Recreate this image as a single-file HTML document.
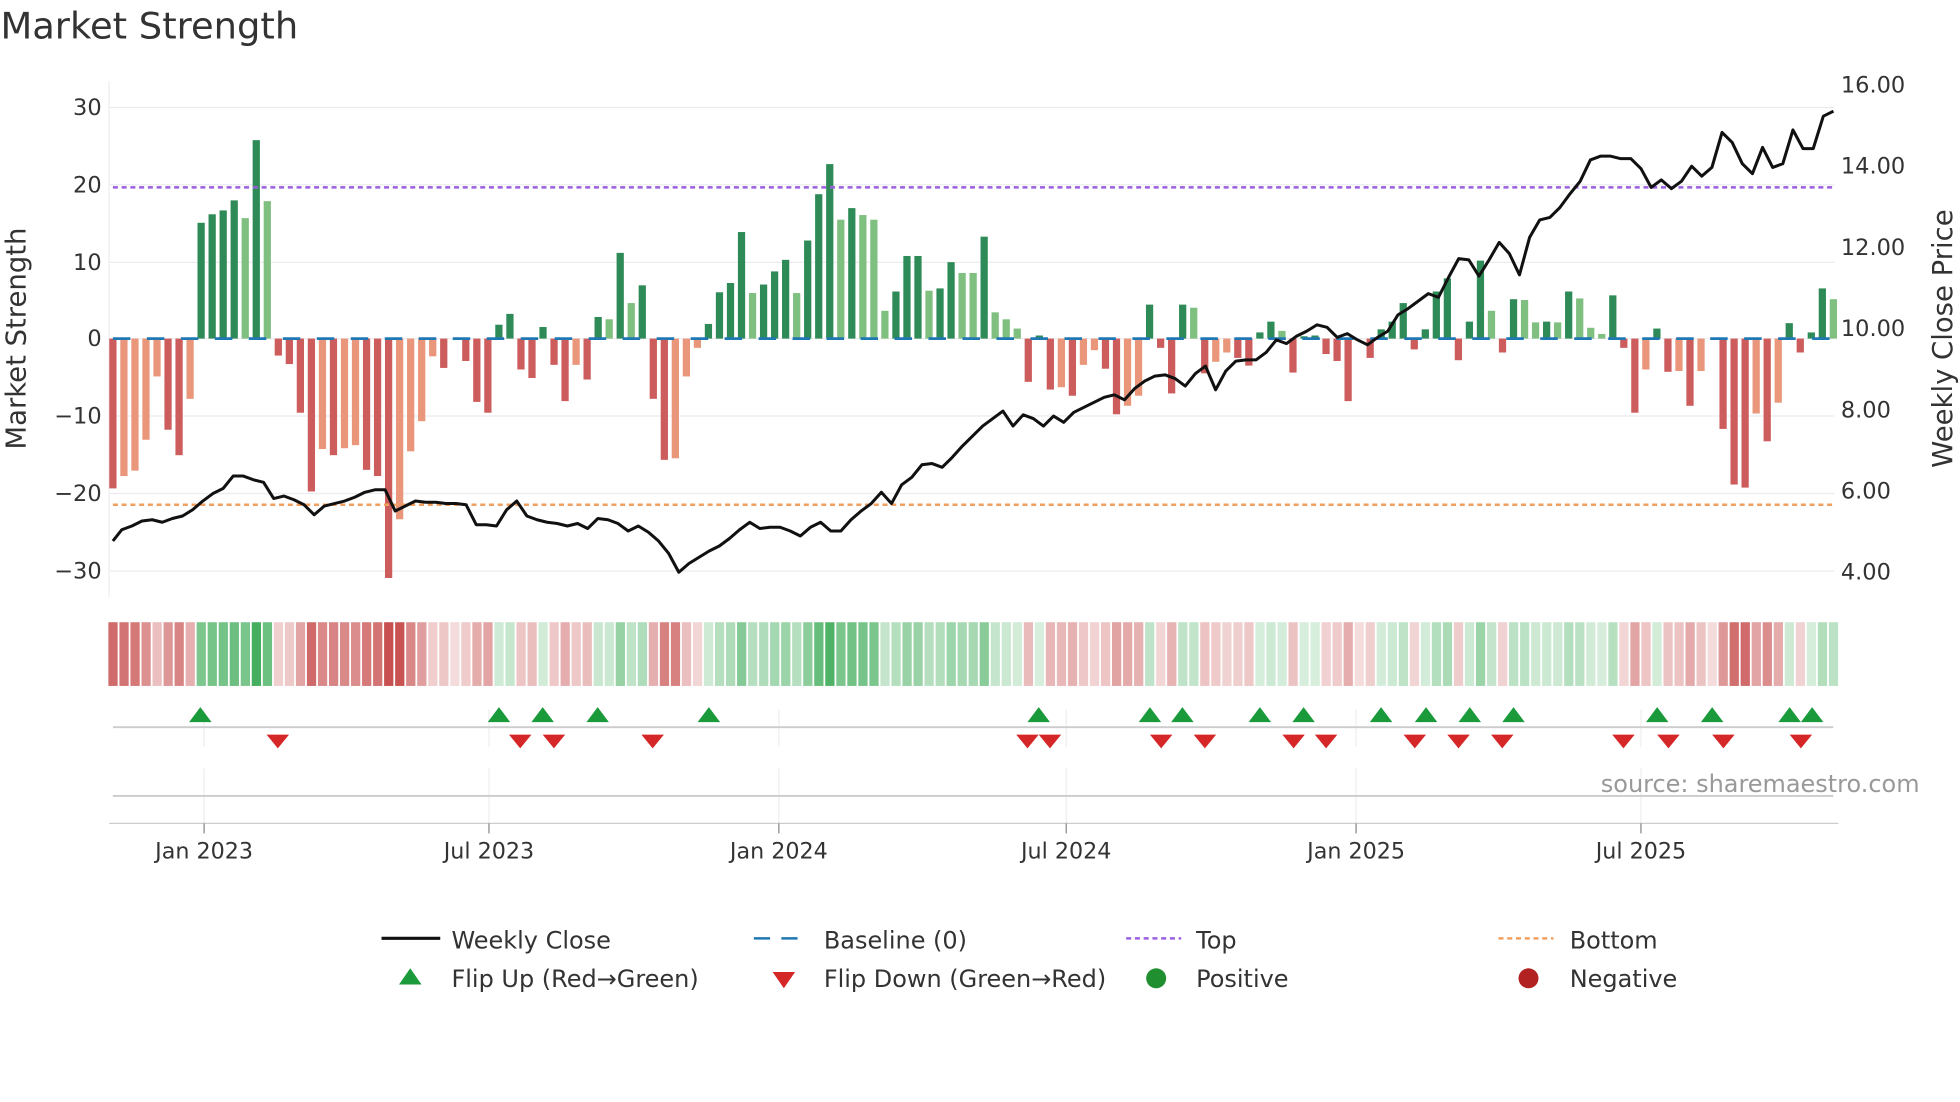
<!DOCTYPE html>
<html><head><meta charset="utf-8"><style>
html,body{margin:0;padding:0;background:#fff;}
svg{display:block;font-family:"DejaVu Sans","Liberation Sans",sans-serif;}
</style></head><body>
<svg id="s" width="1960" height="1102" viewBox="0 0 1568 882" xmlns="http://www.w3.org/2000/svg">
<rect width="1568" height="882" fill="#fff"/>
<text x="0" y="31" font-size="29.5" fill="#333">Market Strength</text>
<g id="grid" stroke="#ececf0" stroke-width="1"></g>
<line x1="87" y1="65" x2="87" y2="478" stroke="#eee"/>
<g id="bars"></g>
<g id="base"></g>
<line x1="90" y1="150" x2="1468" y2="150" stroke="#9b5fe0" stroke-width="2" stroke-dasharray="4,3"/>
<line x1="90" y1="404" x2="1468" y2="404" stroke="#f0a060" stroke-width="2" stroke-dasharray="4,3"/>
<polyline id="price" fill="none" stroke="#111" stroke-width="2.4" stroke-linejoin="round" transform="translate(90,0) scale(1.0133,1) translate(-90,0)"/>
<g font-size="18" fill="#333" text-anchor="end">
<text x="81" y="92">30</text><text x="81" y="154">20</text><text x="81" y="216">10</text><text x="81" y="277">0</text>
<text x="81" y="339">−10</text><text x="81" y="401">−20</text><text x="81" y="463">−30</text>
</g>
<g font-size="18" fill="#333">
<text x="1473" y="74">16.00</text><text x="1473" y="139">14.00</text><text x="1473" y="204">12.00</text><text x="1473" y="269">10.00</text>
<text x="1473" y="334">8.00</text><text x="1473" y="399">6.00</text><text x="1473" y="464">4.00</text>
</g>
<text transform="translate(20,271) rotate(-90)" font-size="22" fill="#333" text-anchor="middle">Market Strength</text>
<text transform="translate(1562,271) rotate(-90)" font-size="22" fill="#333" text-anchor="middle">Weekly Close Price</text>
<g id="strip"></g>
<g stroke="#eee"><line x1="163" y1="568" x2="163" y2="598"/><line x1="391" y1="568" x2="391" y2="598"/><line x1="623" y1="568" x2="623" y2="598"/><line x1="853" y1="568" x2="853" y2="598"/><line x1="1085" y1="568" x2="1085" y2="598"/><line x1="1313" y1="568" x2="1313" y2="598"/>
<line x1="163" y1="615" x2="163" y2="659"/><line x1="391" y1="615" x2="391" y2="659"/><line x1="623" y1="615" x2="623" y2="659"/><line x1="853" y1="615" x2="853" y2="659"/><line x1="1085" y1="615" x2="1085" y2="659"/><line x1="1313" y1="615" x2="1313" y2="659"/></g>
<line x1="90" y1="582" x2="1467" y2="582" stroke="#ccc" stroke-width="1.5"/>
<line x1="90" y1="637" x2="1467" y2="637" stroke="#ccc" stroke-width="1.5"/>
<line x1="87" y1="659" x2="1471" y2="659" stroke="#ccc" stroke-width="1"/>
<g id="flips"></g>
<g stroke="#888"><line x1="163" y1="659" x2="163" y2="667"/><line x1="391" y1="659" x2="391" y2="667"/><line x1="623" y1="659" x2="623" y2="667"/><line x1="853" y1="659" x2="853" y2="667"/><line x1="1085" y1="659" x2="1085" y2="667"/><line x1="1313" y1="659" x2="1313" y2="667"/></g>
<g font-size="17.8" fill="#333" text-anchor="middle">
<text x="163" y="687">Jan 2023</text><text x="391" y="687">Jul 2023</text><text x="623" y="687">Jan 2024</text><text x="853" y="687">Jul 2024</text><text x="1085" y="687">Jan 2025</text><text x="1313" y="687">Jul 2025</text>
</g>
<text x="1536" y="634" font-size="19.2" fill="#999" text-anchor="end">source: sharemaestro.com</text>
<g font-size="19.2" fill="#333">
<line x1="305" y1="751" x2="352" y2="751" stroke="#111" stroke-width="2.5"/><text x="361" y="759">Weekly Close</text>
<line x1="603" y1="751" x2="647" y2="751" stroke="#1f77b4" stroke-width="2" stroke-dasharray="13,9"/><text x="659" y="759">Baseline (0)</text>
<line x1="901" y1="751" x2="945" y2="751" stroke="#9b5fe0" stroke-width="2" stroke-dasharray="4,3"/><text x="957" y="759">Top</text>
<line x1="1199" y1="751" x2="1243" y2="751" stroke="#f0a060" stroke-width="2" stroke-dasharray="4,3"/><text x="1256" y="759">Bottom</text>
<polygon points="319,788 328,775 337,788" fill="#1a9a3a"/><text x="361" y="790">Flip Up (Red→Green)</text>
<polygon points="618,778 627,791 636,778" fill="#d62728"/><text x="659" y="790">Flip Down (Green→Red)</text>
<circle cx="925" cy="783" r="8" fill="#1f8f2f"/><text x="957" y="790">Positive</text>
<circle cx="1223" cy="783" r="8" fill="#b22222"/><text x="1256" y="790">Negative</text>
</g>
</svg>
<script>
var NS="http://www.w3.org/2000/svg";
function el(t,a,p){var e=document.createElementNS(NS,t);for(var k in a)e.setAttribute(k,a[k]);document.getElementById(p).appendChild(e);return e;}
[86,148,210,271,333,395,457].forEach(function(y){el("line",{x1:87,x2:1468,y1:y,y2:y},"grid");});
var B=[[-19.4,'r'],[-17.8,'s'],[-17.1,'s'],[-13.1,'s'],[-4.9,'s'],[-11.8,'r'],[-15.1,'r'],[-7.8,'s'],[15,'d'],[16.1,'d'],[16.6,'d'],[17.9,'d'],[15.6,'l'],[25.7,'d'],[17.8,'l'],
[-2.2,'r'],[-3.3,'r'],[-9.6,'r'],[-19.8,'r'],[-14.3,'s'],[-15.1,'r'],[-14.2,'s'],[-13.8,'s'],[-17,'r'],[-17.8,'r'],[-31,'r'],[-23.4,'s'],[-14.6,'s'],[-10.7,'s'],[-2.3,'s'],[-3.8,'r'],[0,'r'],[-2.9,'r'],[-8.2,'r'],[-9.6,'r'],[1.8,'d'],[3.2,'d'],[-4,'r'],[-5.1,'r'],[1.5,'d'],[-3.4,'r'],
[-8.1,'r'],[-3.4,'s'],[-5.3,'r'],[2.8,'d'],[2.5,'l'],[11.1,'d'],[4.6,'l'],[6.9,'d'],[-7.8,'r'],[-15.7,'r'],[-15.5,'s'],[-4.9,'s'],[-1.2,'s'],[1.9,'d'],[6,'d'],[7.2,'d'],[13.8,'d'],[5.9,'l'],[7,'d'],[8.7,'d'],[10.2,'d'],[5.9,'l'],[12.7,'d'],[18.7,'d'],[22.6,'d'],[15.4,'l'],[16.9,'d'],[16,'l'],[15.4,'l'],[3.6,'l'],[6.1,'d'],[10.7,'d'],[10.7,'d'],[6.2,'l'],[6.5,'d'],[9.9,'d'],[8.5,'l'],[8.5,'l'],[13.2,'d'],[3.4,'l'],
[2.5,'l'],[1.3,'l'],[-5.6,'r'],[0.4,'d'],[-6.6,'r'],[-6.3,'s'],[-7.4,'r'],[-3.4,'s'],[-1.5,'s'],[-3.9,'r'],[-9.8,'r'],[-8.7,'s'],[-7.4,'s'],[4.4,'d'],[-1.2,'r'],[-7.1,'r'],[4.4,'d'],[4,'l'],[-4.5,'r'],[-3,'s'],[-1.8,'s'],[-2.5,'r'],[-3.5,'r'],[0.8,'d'],[2.2,'d'],[1,'l'],[-4.4,'r'],[0.3,'d'],[0.4,'d'],[-2,'r'],[-2.9,'r'],[-8.1,'r'],[0,'r'],[-2.5,'r'],[1.2,'d'],[2.2,'d'],[4.6,'d'],[-1.4,'r'],[1.2,'d'],[6.1,'d'],[7.8,'d'],
[-2.8,'r'],[2.2,'d'],[10.1,'d'],[3.6,'l'],[-1.8,'r'],[5.1,'d'],[5,'l'],[2.1,'l'],[2.2,'d'],[2.1,'l'],[6.1,'d'],[5.2,'l'],[1.4,'l'],[0.6,'l'],[5.6,'d'],[-1.2,'r'],[-9.6,'r'],[-4,'s'],[1.3,'d'],[-4.3,'r'],[-4.2,'s'],[-8.7,'r'],[-4.2,'s'],[0,'r'],[-11.7,'r'],[-18.9,'r'],[-19.3,'r'],[-9.7,'s'],[-13.3,'r'],[-8.3,'s'],[2,'d'],[-1.8,'r'],[0.8,'d'],[6.5,'d'],[5.1,'l']];
var C={d:'#2e8b57',l:'#7fbf7f',r:'#cd5c5c',s:'#e9967a'};
var n=B.length,x0=90,p=(1467-90)/(n-1),k=6.18,y0=271;
B.forEach(function(b,i){var x=x0+i*p,v=b[0];
 if(v!==0){var h=Math.abs(v)*k;el("rect",{x:x-2.9,y:v>0?y0-h:y0,width:5.8,height:h,fill:C[b[1]]},"bars");}
 var a=Math.min(0.2+0.8*Math.abs(v)/24,1);
 el("rect",{x:x-3.6,y:498,width:7.4,height:51,fill:v>0?'rgba(70,175,95,'+a+')':'rgba(200,80,80,'+a+')'},"strip");
});
for(var x=90;x<1468;x+=27.2){el("line",{x1:x,x2:Math.min(x+14,1468),y1:271,y2:271,stroke:"#1f77b4","stroke-width":2.2},"base");}
var P=[[90,433],[97,424],[105,421],[113,417],[121,416],[129,418],[137,415],[145,413],[153,408],[161,401],[169,395],[177,391],[185,381],[193,381],[201,384],[209,386],[217,399],[225,397],[233,400],[241,404],[249,412],[257,405],[265,403],[273,401],[281,398],[289,394],[297,392],[305,392],[313,409],[321,405],[329,401],[337,402],[345,402],[353,403],[361,403],[369,404],[377,420],[385,420],[393,421],[401,408],[409,401],[417,413],[425,416],[433,418],[441,419],[449,421],[457,419],[465,423],[473,415],[481,416],[489,419],[497,425],[505,421],[513,426],[521,433],[529,443],[537,458],[545,451],[553,446],[561,441],[569,437],[577,431],[585,424],[593,418],[601,423],[609,422],[617,422],[625,425],[633,429],[641,422],[649,418],[657,425],[665,425],[673,416],[681,409],[689,403],[697,394],[705,403],[713,388],[721,382],[729,372],[737,371],[745,374],[753,366],[761,357],[769,349],[777,341],[785,335],[793,329],[801,341],[809,332],[817,335],[825,341],[833,333],[841,338],[849,330],[857,326],[865,322],[873,318],[881,316],[889,320],[897,311],[905,305],[913,301],[921,300],[929,303],[937,309],[945,299],[953,293],[961,312],[969,297],[977,289],[985,288],[993,288],[1001,282],[1009,272],[1017,275],[1025,269],[1033,265],[1041,260],[1049,262],[1057,270],[1065,267],[1073,272],[1081,276],[1089,270],[1097,265],[1105,252],[1113,247],[1121,241],[1129,235],[1137,238],[1145,222],[1153,207],[1161,208],[1169,221],[1177,208],[1185,194],[1193,203],[1201,220],[1209,190],[1217,176],[1225,174],[1233,166],[1241,155],[1249,145],[1257,128],[1265,125],[1273,125],[1281,127],[1289,127],[1297,135],[1305,150],[1313,144],[1321,151],[1329,145],[1337,133],[1345,141],[1353,134],[1361,106],[1369,114],[1377,131],[1385,139],[1393,118],[1401,134],[1409,131],[1417,104],[1425,119],[1433,119],[1441,93],[1449,89]];
document.getElementById("price").setAttribute("points",P.map(function(q){return q.join(",");}).join(" "));
[160,399,434,478,567,831,920,946,1008,1043,1105,1141,1176,1211,1326,1370,1432,1450].forEach(function(x){el("polygon",{points:(x-9)+",578 "+x+",566 "+(x+9)+",578",fill:"#1a9a3a"},"flips");});
[222,416,443,522,822,840,929,964,1035,1061,1132,1167,1202,1299,1335,1379,1441].forEach(function(x){el("polygon",{points:(x-9)+",588 "+x+",599 "+(x+9)+",588",fill:"#d62728"},"flips");});
</script>
</body></html>
